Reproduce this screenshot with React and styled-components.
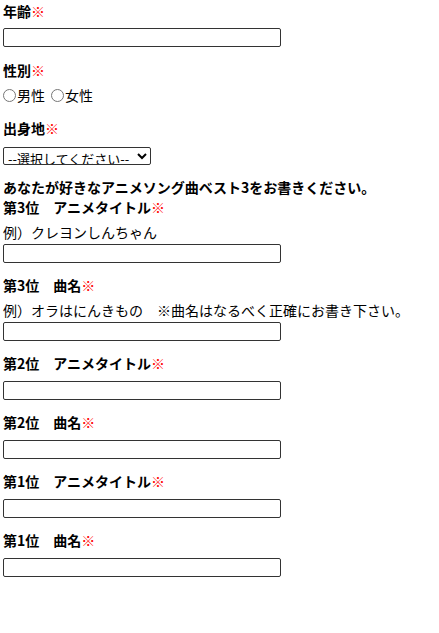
import React from "react";
import styled, { createGlobalStyle } from "styled-components";

const GlobalStyle = createGlobalStyle`
  body {
    margin: 0;
    background: #fff;
    color: #000;
    font-family: "Noto Sans CJK JP", "Noto Sans", sans-serif;
    font-size: 14px;
  }
`;

const Form = styled.form`
  padding: 1px 3px 40px;
  display: flex;
  flex-direction: column;
`;

const Field = styled.div`
  display: flex;
  flex-direction: column;
  align-items: flex-start;
  margin-bottom: ${(p) => p.$mb ?? 12}px;
`;

const Label = styled.div`
  font-weight: bold;
  line-height: 20px;
  height: 20px;
  margin-bottom: ${(p) => p.$mb ?? 7}px;
  white-space: nowrap;
`;

const Req = styled.span`
  color: #f00;
  font-weight: normal;
`;

const Hint = styled.div`
  line-height: 20px;
  margin-bottom: 2px;
  white-space: nowrap;
`;

const TextInput = styled.input`
  box-sizing: border-box;
  width: 278px;
  height: 19px;
  margin: 0;
  border: 1px solid #333;
  border-radius: 2px;
  padding: 0 3px;
  font: inherit;
`;

const RadioRow = styled.div`
  display: flex;
  align-items: center;
  line-height: 20px;
  gap: 6px;
`;

const RadioLabel = styled.label`
  display: flex;
  align-items: center;
  gap: 1px;
`;

const Radio = styled.input`
  margin: 0;
  width: 13px;
  height: 13px;
`;

const Select = styled.select`
  box-sizing: border-box;
  height: 18px;
  width: 148px;
  margin: 0;
  padding: 0;
  border: 1px solid #333;
  border-radius: 2px;
  font-family: "Noto Sans CJK JP", sans-serif;
  font-size: 13px;
  line-height: 14px;
  color: #000;
  background: #fff;
`;

const Intro = styled.div`
  font-weight: bold;
  line-height: 19px;
  white-space: nowrap;
`;

const RankField = ({ title, hint }) => (
  <Field>
    <Label $mb={hint ? 5 : 8}>
      {title}
      <Req>※</Req>
    </Label>
    {hint && <Hint>{hint}</Hint>}
    <TextInput type="text" />
  </Field>
);

export default function App() {
  return (
    <>
      <GlobalStyle />
      <Form>
        <Field $mb={13}>
          <Label>
            年齢<Req>※</Req>
          </Label>
          <TextInput type="text" />
        </Field>
        <Field $mb={13}>
          <Label $mb={5}>
            性別<Req>※</Req>
          </Label>
          <RadioRow>
            <RadioLabel>
              <Radio type="radio" name="sex" />
              男性
            </RadioLabel>
            <RadioLabel>
              <Radio type="radio" name="sex" />
              女性
            </RadioLabel>
          </RadioRow>
        </Field>
        <Field $mb={13}>
          <Label $mb={9}>
            出身地<Req>※</Req>
          </Label>
          <Select defaultValue="">
            <option value="">--選択してください--</option>
          </Select>
        </Field>
        <Intro>あなたが好きなアニメソング曲ベスト3をお書きください。</Intro>
        <RankField title="第3位　アニメタイトル" hint="例）クレヨンしんちゃん" />
        <RankField
          title="第3位　曲名"
          hint="例）オラはにんきもの　※曲名はなるべく正確にお書き下さい。"
        />
        <RankField title="第2位　アニメタイトル" />
        <RankField title="第2位　曲名" />
        <RankField title="第1位　アニメタイトル" />
        <RankField title="第1位　曲名" />
      </Form>
    </>
  );
}
